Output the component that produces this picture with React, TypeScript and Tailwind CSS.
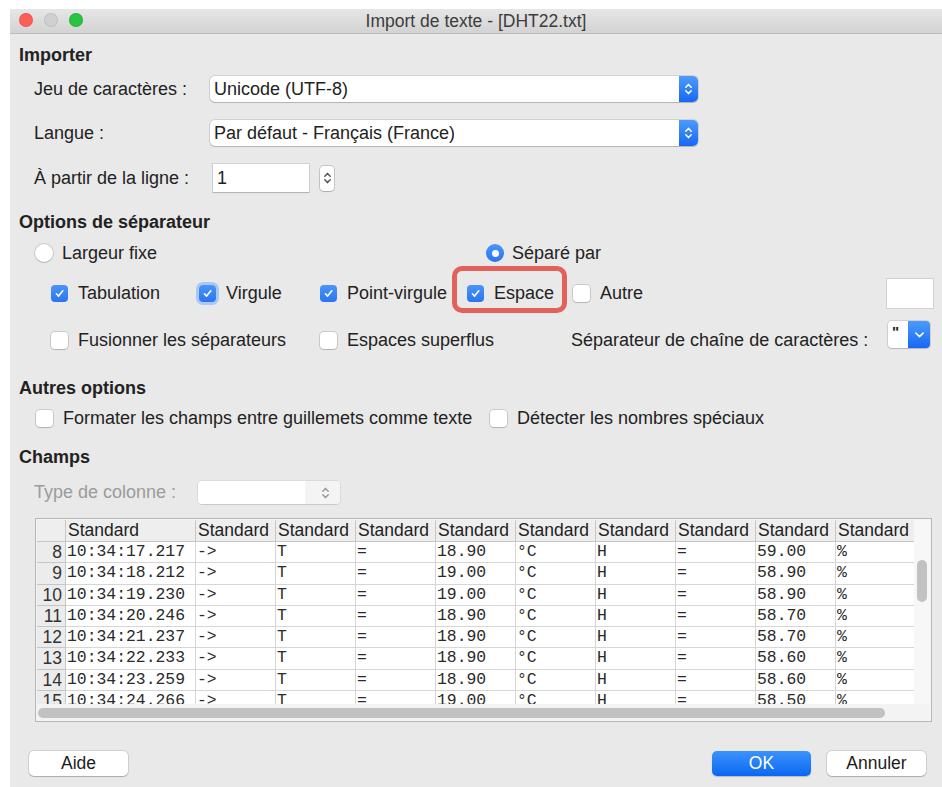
import React from "react";

const ui = "font-['Liberation_Sans',Arial,sans-serif]";

function UpDown(props: { color?: string }) {
  const c = props.color ?? "#fff";
  return (
    <svg width="9" height="14" viewBox="0 0 9 14" fill="none">
      <path d="M1.8 5.2 L4.5 2.4 L7.2 5.2" stroke={c} strokeWidth="1.5" strokeLinecap="round" strokeLinejoin="round" />
      <path d="M1.8 8.8 L4.5 11.6 L7.2 8.8" stroke={c} strokeWidth="1.5" strokeLinecap="round" strokeLinejoin="round" />
    </svg>
  );
}

function Check(props: { on?: boolean; focus?: boolean }) {
  if (props.on) {
    return (
      <span
        className={
          "flex h-[17px] w-[17px] shrink-0 items-center justify-center rounded-[4px] bg-linear-to-b from-[#4a94f8] to-[#2b74f2] " +
          (props.focus ? "shadow-[0_0_0_3px_#a9c9f3]" : "")
        }
      >
        <svg width="11" height="11" viewBox="0 0 11 11" fill="none">
          <path d="M2.4 5.8 L4.6 8.1 L8.8 2.8" stroke="#fff" strokeWidth="1.6" strokeLinecap="round" strokeLinejoin="round" />
        </svg>
      </span>
    );
  }
  return <span className="h-[17px] w-[17px] shrink-0 rounded-[4px] bg-white shadow-[0_0_0_1px_rgba(0,0,0,0.13),0_1px_1px_rgba(0,0,0,0.12)]" />;
}

function Radio(props: { on?: boolean }) {
  if (props.on) {
    return (
      <span className="flex h-[18px] w-[18px] shrink-0 items-center justify-center rounded-full bg-linear-to-b from-[#4a94f8] to-[#2b74f2]">
        <span className="h-[7px] w-[7px] rounded-full bg-white" />
      </span>
    );
  }
  return <span className="h-[18px] w-[18px] shrink-0 rounded-full bg-white shadow-[0_0_0_1px_rgba(0,0,0,0.13),0_1px_1px_rgba(0,0,0,0.12)]" />;
}

function Option(props: { label: string; on?: boolean; focus?: boolean; className?: string }) {
  return (
    <div className={"flex items-center gap-[10px] " + (props.className ?? "")}>
      <Check on={props.on} focus={props.focus} />
      <span>{props.label}</span>
    </div>
  );
}

function Select(props: { value: string }) {
  return (
    <div className="flex h-[26px] w-[488px] rounded-[5px] bg-white shadow-[0_0_0_1px_rgba(0,0,0,0.1),0_1px_1px_rgba(0,0,0,0.15)]">
      <span className="flex-1 pl-[4px] leading-[26px]">{props.value}</span>
      <span className="flex w-[19px] items-center justify-center rounded-r-[5px] bg-linear-to-b from-[#4c9bfa] to-[#1767f4]">
        <UpDown />
      </span>
    </div>
  );
}

function Heading(props: { children: React.ReactNode; className?: string }) {
  return <div className={"h-[20px] text-[18px] font-bold leading-[20px] " + (props.className ?? "")}>{props.children}</div>;
}

const rows = [
  ["8", "10:34:17.217", "18.90", "59.00"],
  ["9", "10:34:18.212", "19.00", "58.90"],
  ["10", "10:34:19.230", "19.00", "58.90"],
  ["11", "10:34:20.246", "18.90", "58.70"],
  ["12", "10:34:21.237", "18.90", "58.70"],
  ["13", "10:34:22.233", "18.90", "58.60"],
  ["14", "10:34:23.259", "18.90", "58.60"],
  ["15", "10:34:24.266", "19.00", "58.50"],
];

function Preview() {
  const head = "h-[22px] border-r border-b border-[#c6c6c6] bg-[#eeeeee] pl-[2px] text-[17.5px] leading-[21px] whitespace-nowrap overflow-hidden";
  const cell = "h-[21.3px] border-r border-b border-[#d6d6d6] bg-white pl-[1px] font-['Liberation_Mono',monospace] text-[16.4px] leading-[20px] text-[#2a2a2a] whitespace-nowrap overflow-hidden";
  return (
    <div className="flex h-[204px] w-[897px] flex-col border border-[#b8b8b8] bg-[#f3f3f3] p-[1px] pb-0">
      <div className="flex h-[184px] shrink-0">
        <div className="h-[184px] w-[879px] overflow-hidden">
          <div className="grid grid-cols-[29px_130px_repeat(9,80px)]">
            <div className={head} />
            {Array.from({ length: 10 }).map((_, i) => (
              <div key={i} className={head}>Standard</div>
            ))}
            {rows.map((r) => (
              <React.Fragment key={r[0]}>
                <div className="h-[21.3px] border-r border-b border-[#c6c6c6] bg-[#ececec] pr-[3px] text-right text-[17.5px] leading-[20px] text-[#333]">{r[0]}</div>
                <div className={cell}>{r[1]}</div>
                <div className={cell}>-&gt;</div>
                <div className={cell}>T</div>
                <div className={cell}>=</div>
                <div className={cell}>{r[2]}</div>
                <div className={cell}>°C</div>
                <div className={cell}>H</div>
                <div className={cell}>=</div>
                <div className={cell}>{r[3]}</div>
                <div className={cell}>%</div>
              </React.Fragment>
            ))}
          </div>
        </div>
        {/* vertical scrollbar */}
        <div className="w-[16px] bg-[#f7f7f7] pt-[40px] pl-[3px]">
          <div className="h-[42px] w-[10px] rounded-full bg-[#c2c2c2]" />
        </div>
      </div>
      {/* horizontal scrollbar */}
      <div className="flex h-[17px] items-center pl-[1px]">
        <div className="h-[10px] w-[847px] rounded-full bg-[#c2c2c2]" />
      </div>
    </div>
  );
}

function Button(props: { label: string; primary?: boolean; className?: string }) {
  return (
    <div
      className={
        "flex h-[25px] w-[99px] items-center justify-center rounded-[5px] text-[17.5px] " +
        (props.primary
          ? "bg-linear-to-b from-[#3b93fb] to-[#0866f2] text-white shadow-[0_1px_1px_rgba(0,0,0,0.2)]"
          : "bg-white text-[#1c1c1c] shadow-[0_0_0_1px_rgba(0,0,0,0.1),0_1px_1px_rgba(0,0,0,0.18)]") +
        " " +
        (props.className ?? "")
      }
    >
      {props.label}
    </div>
  );
}

export default function App() {
  return (
    <div className={"h-[787px] w-[942px] overflow-hidden bg-white pt-[9px] pl-[10px] text-[18px] text-[#222] " + ui}>
      <div className="flex h-[778px] flex-col bg-[#e9e9e9]">
        {/* title bar */}
        <div className="relative flex h-[25px] shrink-0 items-center justify-center border-b border-[#bcbcbc] bg-linear-to-b from-[#e6e6e6] to-[#d3d3d3]">
          <div className="absolute top-[4px] left-[9px] flex gap-[11px]">
            <span className="h-[14px] w-[14px] rounded-full bg-[#fc5f57] shadow-[inset_0_0_0_1px_rgba(0,0,0,0.08)]" />
            <span className="h-[14px] w-[14px] rounded-full bg-[#d0d0d0] shadow-[inset_0_0_0_1px_rgba(0,0,0,0.08)]" />
            <span className="h-[14px] w-[14px] rounded-full bg-[#29c440] shadow-[inset_0_0_0_1px_rgba(0,0,0,0.08)]" />
          </div>
          <span className="text-[17.5px] text-[#3c3c3c]">Import de texte - [DHT22.txt]</span>
        </div>

        <div className="flex flex-col px-[9px] pt-[11px]">
          <Heading>Importer</Heading>

          <div className="mt-[11px] flex h-[26px] items-center pl-[15px]">
            <span className="w-[176px]">Jeu de caractères :</span>
            <Select value="Unicode (UTF-8)" />
          </div>
          <div className="mt-[18px] flex h-[26px] items-center pl-[15px]">
            <span className="w-[176px]">Langue :</span>
            <Select value="Par défaut - Français (France)" />
          </div>
          <div className="mt-[18px] flex h-[28px] items-center pl-[15px]">
            <span className="w-[179px]">À partir de la ligne :</span>
            <div className="h-[28px] w-[96px] bg-white pl-[4px] leading-[28px] shadow-[0_0_0_1px_rgba(0,0,0,0.1),0_1px_1px_rgba(0,0,0,0.12)]">1</div>
            <div className="ml-[11px] flex h-[25px] w-[14px] items-center justify-center rounded-[4px] bg-white shadow-[0_0_0_1px_rgba(0,0,0,0.15),0_1px_1px_rgba(0,0,0,0.12)]">
              <UpDown color="#555" />
            </div>
          </div>

          <Heading className="mt-[20px]">Options de séparateur</Heading>

          <div className="mt-[11px] flex h-[20px] items-center pl-[16px]">
            <div className="flex w-[451px] items-center gap-[9px]">
              <Radio />
              <span>Largeur fixe</span>
            </div>
            <div className="flex items-center gap-[8px]">
              <Radio on />
              <span>Séparé par</span>
            </div>
          </div>

          <div className="mt-[15px] flex h-[30px] items-center pl-[32px]">
            <Option label="Tabulation" on className="w-[148px]" />
            <Option label="Virgule" on focus className="w-[121px]" />
            <Option label="Point-virgule" on className="w-[147px]" />
            <div className="relative w-[106px]">
              <Option label="Espace" on />
              <span className="absolute -top-[14px] -left-[15px] h-[47px] w-[115px] rounded-[10px] border-[5px] border-[#e0625a]" />
            </div>
            <Option label="Autre" />
            <div className="ml-auto h-[29px] w-[46px] bg-white shadow-[0_0_0_1px_rgba(0,0,0,0.1)]" />
          </div>

          <div className="mt-[18px] flex h-[28px] items-center pl-[32px] pr-[3px]">
            <Option label="Fusionner les séparateurs" className="w-[269px]" />
            <Option label="Espaces superflus" className="w-[251px]" />
            <span>Séparateur de chaîne de caractères :</span>
            <div className="mb-[11px] ml-auto flex h-[27px] w-[42px] rounded-[4px] bg-white shadow-[0_0_0_1px_rgba(0,0,0,0.1),0_1px_1px_rgba(0,0,0,0.12)]">
              <span className="flex-1 pl-[4px] text-[15px] font-bold leading-[22px]">"</span>
              <span className="flex w-[22px] items-center justify-center rounded-r-[4px] bg-linear-to-b from-[#4c9bfa] to-[#1767f4]">
                <svg width="11" height="8" viewBox="0 0 11 8" fill="none">
                  <path d="M1.8 2 L5.5 5.6 L9.2 2" stroke="#fff" strokeWidth="1.6" strokeLinecap="round" strokeLinejoin="round" />
                </svg>
              </span>
            </div>
          </div>

          <Heading className="mt-[24px]">Autres options</Heading>

          <div className="mt-[10px] flex h-[20px] items-center pl-[17px]">
            <Option label="Formater les champs entre guillemets comme texte" className="w-[454px]" />
            <Option label="Détecter les nombres spéciaux" />
          </div>

          <Heading className="mt-[19px]">Champs</Heading>

          <div className="mt-[14px] flex h-[23px] items-center pl-[15px]">
            <span className="w-[164px] text-[#9b9b9b]">Type de colonne :</span>
            <div className="flex h-[23px] w-[142px] overflow-hidden rounded-[4px] bg-white shadow-[0_0_0_1px_rgba(0,0,0,0.06),0_1px_1px_rgba(0,0,0,0.08)]">
              <span className="w-[107px] bg-white" />
              <span className="flex flex-1 items-center justify-center bg-[#f4f4f4] pl-[6px]">
                <UpDown color="#9a9a9a" />
              </span>
            </div>
          </div>

          <div className="mt-[14px] pl-[16px]">
            <Preview />
          </div>

          <div className="mt-[29px] flex items-center pl-[10px] pr-[7px]">
            <Button label="Aide" />
            <Button label="OK" primary className="ml-auto" />
            <Button label="Annuler" className="ml-[16px]" />
          </div>
        </div>
      </div>
    </div>
  );
}
